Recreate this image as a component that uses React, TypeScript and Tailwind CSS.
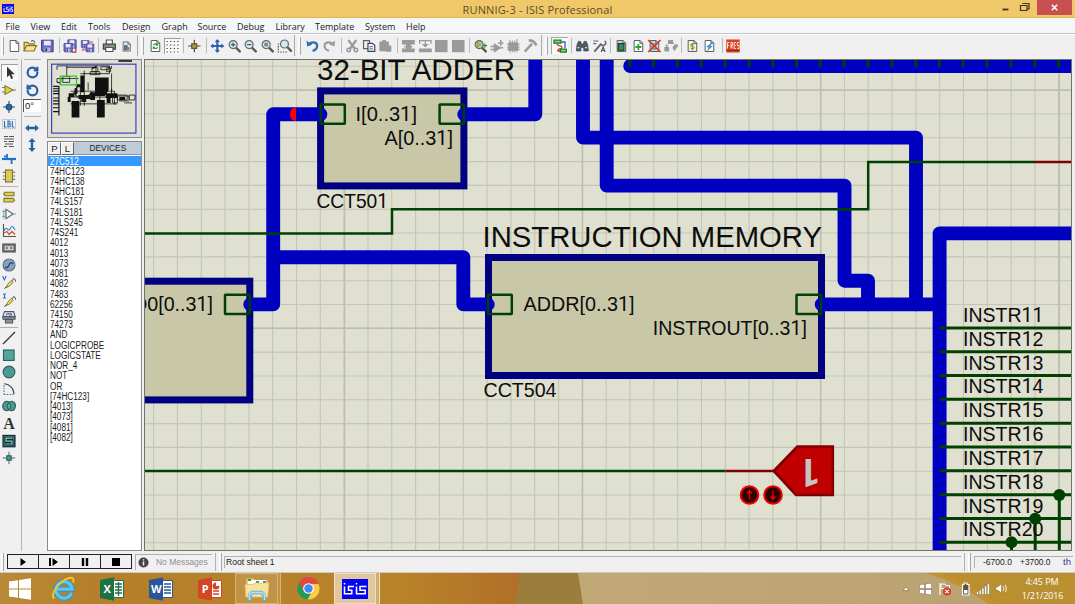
import React from "react";
import { RotateCw, RotateCcw } from "lucide-react";

type Kids = { children?: React.ReactNode };

/* ---------- small building blocks ---------- */

function Ico({ children }: Kids) {
  return (
    <svg viewBox="0 0 14 14" className="h-[14px] w-[16.7px] shrink-0" fill="none" strokeWidth="1.2">
      {children}
    </svg>
  );
}

function Sep() {
  return <div className="ml-auto mr-[2px] h-[15px] w-px shrink-0 bg-[#b9b9b9]" />;
}

function Grip() {
  return <div className="mr-[3px] h-[18px] w-[3px] shrink-0 border-r border-l border-r-[#a6a6a6] border-l-white bg-[#f4f4f4]" />;
}

function BigSep() {
  return (
    <div className="ml-auto flex h-[21px] items-center">
      <div className="mr-[3px] h-[21px] w-px bg-[#a8a8a8]" />
      <Grip />
    </div>
  );
}

const Page = ({ fill = "#fff" }: { fill?: string }) => (
  <path d="M2.8 1.5h6l2.6 2.6v8.4H2.8zM8.6 1.5v2.8h2.8" fill={fill} stroke="#5a5f66" strokeWidth="1" />
);

const Disk = ({ x = 1.2, y = 1.2, s = 1 }: { x?: number; y?: number; s?: number }) => (
  <g transform={`translate(${x} ${y}) scale(${s})`}>
    <path d="M0 0h11.6v11.6H1.2L0 10.4z" fill="#6a68c8" stroke="#35337a" strokeWidth=".9" />
    <rect x="2.4" y=".6" width="6.8" height="4.6" fill="#e9e9f6" />
    <rect x="3" y="7.4" width="5.8" height="4" fill="#b7b9d8" />
    <rect x="3.8" y="8" width="1.8" height="3" fill="#35337a" />
  </g>
);

const Lens = ({ children, fill = "#d9e8ec" }: Kids & { fill?: string }) => (
  <>
    <path d="M8.6 8.6l3.8 3.8" stroke="#6b5640" strokeWidth="2.4" strokeLinecap="round" />
    <circle cx="5.8" cy="5.6" r="4" fill={fill} stroke="#5f6a70" strokeWidth="1.2" />
    {children}
  </>
);

/* ---------- title and menu ---------- */

function TitleBar() {
  return (
    <div className="flex h-[18px] items-start border-b border-[#dcb45c] bg-[#f0c869]">
      <div className="flex w-[20px] pt-[4px] pl-[2px]">
        <svg viewBox="0 0 12 10" className="h-[10px] w-[12px] bg-[#0808f0]" fill="none" stroke="#fff" strokeWidth=".9">
          <path d="M2 2v.8M2 4v3.6h2M6.5 3.2H4.4v2h2v2.4H4M8 2v.8M8 4v3.6M11 3.2H9.2v2h1.4v2.4H8.6" />
        </svg>
      </div>
      <div className="flex-1 pl-[54px] text-center font-['Open_Sans',sans-serif] text-[11px] leading-[19px] tracking-[0.15px] text-[#5d4c28]">
        RUNNIG-3 - ISIS Professional
      </div>
      <div className="flex h-[15px] items-center">
        <svg viewBox="0 0 36 15" className="h-[15px] w-[36px]" fill="none" stroke="#3d3420">
          <path d="M1.5 9.5h6" strokeWidth="1.8" />
          <path d="M21 5.5h5v5h-6.5v-5zM22 4V3.500h6V9h-1.500" strokeWidth="1.2" />
        </svg>
        <div className="mr-[3px] flex h-[15px] w-[35px] items-center justify-center bg-[#c75050]">
          <svg viewBox="0 0 7 7" className="h-[7px] w-[7px]" stroke="#fff" strokeWidth="1.5">
            <path d="M.8.8l5.4 5.4M6.2.8L.8 6.2" />
          </svg>
        </div>
      </div>
    </div>
  );
}

function MenuBar() {
  const item = "shrink-0 whitespace-nowrap";
  return (
    <div className="flex h-[16px] items-center border-b border-[#c4c4c4] bg-[#f4f6f8] pt-[2px] pl-[5.5px] font-['Open_Sans',sans-serif] text-[9px] leading-[14px] text-[#1c1c1c]">
      <span className={`${item} w-[25px]`}>File</span>
      <span className={`${item} w-[30.5px]`}>View</span>
      <span className={`${item} w-[27px]`}>Edit</span>
      <span className={`${item} w-[34px]`}>Tools</span>
      <span className={`${item} w-[39.5px]`}>Design</span>
      <span className={`${item} w-[36px]`}>Graph</span>
      <span className={`${item} w-[39.5px]`}>Source</span>
      <span className={`${item} w-[38.5px]`}>Debug</span>
      <span className={`${item} w-[39.5px]`}>Library</span>
      <span className={`${item} w-[50px]`}>Template</span>
      <span className={`${item} w-[41px]`}>System</span>
      <span className={item}>Help</span>
    </div>
  );
}

/* ---------- main toolbar ---------- */

function Toolbar() {
  const g = "flex shrink-0 items-center";
  const grey = "#9a9a9a";
  return (
    <div className="flex h-[25px] items-center border-t border-white bg-[#f0f0f0] pb-[3px]">
      <div className={`${g} w-[5.7px] pl-[1px]`}><Grip /></div>
      <div className={`${g} w-[56.3px]`}>
        <Ico><Page /></Ico>
        <Ico>
          <path d="M.8 12V3.4h3.6l1 1.4h5.4V7" fill="#efd983" stroke="#8d7326" />
          <path d="M.8 12L3.2 6.6h10L10.6 12z" fill="#f6e596" stroke="#8d7326" />
          <path d="M7.5 2.4c1.6-1.4 3.6-.8 4 1.2" stroke="#5a6b80" />
        </Ico>
        <Ico><Disk /></Ico>
        <Sep />
      </div>
      <div className={`${g} w-[39.5px]`}>
        <Ico><Disk x={4.5} y={0.8} s={0.72} /><Disk x={0.6} y={4.6} s={0.72} /><path d="M8.5 13.2h4V9" stroke="#b33" /></Ico>
        <Ico><Disk x={1} y={1.5} s={0.65} /><Disk x={5.6} y={5} s={0.68} /><path d="M9 3h3.4M1.5 11h3" stroke="#b33" /></Ico>
        <Sep />
      </div>
      <div className={`${g} w-[45.5px]`}>
        <Ico>
          <path d="M4 5V1h6v4" fill="#fff" stroke="#555" />
          <path d="M1 5.2h12v5H1z" fill="#7f8a8a" stroke="#3f4646" />
          <path d="M3.4 8.5h7.2v4H3.4z" fill="#fff" stroke="#555" />
          <path d="M9 7h2.6" stroke="#5ad05a" />
        </Ico>
        <Ico><g transform="translate(1.4 1.6) scale(.84)"><Page fill="#e6e6e6" /><path d="M4.6 6h3v5h-3zM9.4 8v3" fill="#6c7c8c" stroke="#4c5c6c" /></g></Ico>
        <BigSep />
      </div>
      <div className={`${g} w-[39px]`}>
        <Ico><Page /><path d="M5 6.2c.6-1.6 3-1.8 4-.2M9.2 8.2c-.6 1.6-3 1.8-4 .2M9.2 4.4v1.8H7.4M5 10V8.2h1.8" stroke="#1f9c2f" strokeWidth="1.1" /></Ico>
        <div className="flex h-[16px] w-[17px] items-center justify-center border-t border-l border-[#9c9c9c] bg-[#f8f8f8]">
          <svg viewBox="0 0 13 13" className="h-[13px] w-[13px]" stroke="#333" strokeWidth="1.2" strokeDasharray="1.2 2.4">
            <path d="M.5 1.5h13M.5 5h13M.5 8.5h13M.5 12h13" />
          </svg>
        </div>
        <Sep />
      </div>
      <div className={`${g} w-[23px]`}>
        <Ico><path d="M7 .8v12.400M.8 7h12.400" stroke="#4a4a3a" /><path d="M4.400 4.800h5v4.600h-5z" fill="#a8a03c" stroke="#5e5920" /></Ico>
        <Sep />
      </div>
      <div className={`${g} w-[95.5px]`}>
        <Ico><path d="M7 1.5v11M1.5 7h11" stroke="#2a62b8" strokeWidth="2.2" /><path d="M7 0l2.6 3H4.4zM7 14l2.6-3H4.4zM0 7l3-2.6v5.2zM14 7l-3-2.6v5.2z" fill="#2a62b8" /></Ico>
        <Ico><Lens><path d="M3.6 5.6H8M5.8 3.4v4.4" stroke="#456" strokeWidth="1.2" /></Lens></Ico>
        <Ico><Lens><path d="M3.6 5.6H8" stroke="#456" strokeWidth="1.2" /></Lens></Ico>
        <Ico><Lens><rect x="4" y="3.8" width="3.6" height="3.6" fill="#77848a" /></Lens></Ico>
        <Ico><path d="M1 4.5V13h8.5" stroke="#444" strokeDasharray="1.3 1.3" /><g transform="translate(1.3 -.6)"><Lens /></g></Ico>
        <BigSep />
      </div>
      <div className={`${g} w-[39.5px]`}>
        <Ico><path d="M3.4 5.4C6 2.4 11.6 2.6 11.8 6.8c.1 2.6-2 4.6-4.6 5" stroke="#2f6cb4" strokeWidth="2.3" /><path d="M1.2 1.6l.6 6 5-1.8z" fill="#2f6cb4" /></Ico>
        <Ico><path d="M10.6 5.4C8 2.4 2.4 2.6 2.2 6.8c-.1 2.6 2 4.6 4.6 5" stroke={grey} strokeWidth="2.1" /><path d="M12.8 1.6l-.6 6-5-1.8z" fill={grey} /></Ico>
        <Sep />
      </div>
      <div className={`${g} w-[56px]`}>
        <Ico><path d="M3 1l6.6 9M11 1L4.4 10" stroke={grey} strokeWidth="2.2" /><circle cx="3.4" cy="11" r="1.7" stroke={grey} strokeWidth="1.6" /><circle cx="10.6" cy="11" r="1.7" stroke={grey} strokeWidth="1.6" /></Ico>
        <Ico><path d="M1.2 1.6h6v8h-6z" fill="#eef2f6" stroke="#56616c" /><path d="M5.6 4.4H10l2.4 2v6H5.6z" fill="#f6f8fb" stroke="#445" /><path d="M7 7.6h3.6M7 9.8h3.6" stroke="#6b86a8" /></Ico>
        <Ico><path d="M1 2.4h9.6v9.8H1zM4 1h3.6v2H4zM7 6.4h6v6.4H7z" fill={grey} /></Ico>
        <Sep />
      </div>
      <div className={`${g} w-[72px]`}>
        <Ico><path d="M.6 1h12.8v4.400H.6zM4.600 5h4.800v5H4.600zM.6 9.600h12.800v3.600H.6zM3 7h8v1.400H3z" fill={grey} /></Ico>
        <Ico><path d="M1.300 4.800V1.600h11.400v3.200M7 2v6" stroke={grey} strokeWidth="1.3" /><path d="M3.400 5h7.200L7 8.600zM.6 9.600h12.800v3.600H.6z" fill={grey} /></Ico>
        <Ico><path d="M.6 1h12.6v12.200H.6z" fill={grey} /></Ico>
        <Ico><path d="M.6 1h12.6v12.200H.6z" fill={grey} /></Ico>
        <Sep />
      </div>
      <div className={`${g} w-[79.5px]`}>
        <Ico><Lens fill="#b9d0a0"><path d="M4 3.4v4.4l3.6-2.2z" fill="#d9c840" stroke="#6b7a30" strokeWidth=".7" /></Lens><path d="M11.600 4.400v4.400M9.400 6.600h4.400" stroke="#3a8a3a" /></Ico>
        <Ico><path d="M4 5v7.600l6-3.800z" fill={grey} stroke={grey} /><path d="M0 7.400h4M0 10.400h4M9 8.800h4M10.400 1v6M7.600 4h5.600" stroke={grey} strokeWidth="1.5" /></Ico>
        <Ico><path d="M2 3.4h10v8.4H2z" fill={grey} /><path d="M3.600 1v12.600M6 1.4v12M8.4 1.4v12M10.6 0v13M.6 5.4h12.800M.6 8h12.800M.6 10.400h12.800" stroke={grey} strokeWidth="1" /></Ico>
        <Ico><path d="M1.4 12.6l7.4-8" stroke={grey} strokeWidth="2.4" /><path d="M5.4 1.6c3.6-.6 6 1 7.6 5" stroke={grey} strokeWidth="2.6" /></Ico>
        <BigSep />
      </div>
      <div className={`${g} w-[23px]`}>
        <div className="flex h-[17px] w-[16.7px] items-center justify-center border-t border-l border-[#a8a8a8] bg-[#fafafa]">
          <svg viewBox="0 0 14 14" className="h-[14px] w-[14px]" fill="none" strokeWidth="1.3">
            <path d="M4 5c1 3 5 1 5 3.4S4 9 5 12h3" stroke="#d03030" />
            <path d="M8.6 3H12v6" stroke="#3060c0" />
            <path d="M1 1.2h7v3H1zM7.4 10.2h6v3h-6z" fill="#7ad27a" stroke="#1c7c2c" />
          </svg>
        </div>
        <Sep />
      </div>
      <div className={`${g} w-[38.5px]`}>
        <Ico><path d="M1 12l.6-6L3 2.4h2.4L6 5h2l.6-2.6H11L12.4 6l.6 6H8.4V8.4H5.6V12z" fill="#4a5c68" stroke="#2d3a44" strokeWidth=".6" /><path d="M2.2 8.6h2M9.8 8.6h2" stroke="#c8dbe4" /></Ico>
        <Ico><path d="M1 2h5M1 4.6h3" stroke="#666" /><path d="M2 12.6l7-8" stroke="#5b6b78" strokeWidth="2" /><path d="M8.4 4.8a2.6 2.6 0 104-3" stroke="#5b6b78" strokeWidth="1.6" /><path d="M8.8 13l2-5.2 2 5.2M9.4 11.4h2.8" stroke="#555" strokeWidth="1.1" /></Ico>
        <Sep />
      </div>
      <div className={`${g} w-[71.5px]`}>
        <Ico><Page fill="#c9d4cc" /><path d="M4 4.600h5.600v6.600H4z" fill="#2f9c3f" stroke="#17422a" /><circle cx="6.600" cy="7.600" r="1.600" fill="#3a6ad0" /></Ico>
        <Ico><Page /><path d="M7 5v6M4 8h6" stroke="#2aa82a" strokeWidth="1.8" /></Ico>
        <Ico><Page fill="#cdd5dc" /><path d="M4 5h5M4 7.4h5M4 9.8h5" stroke="#67758a" /><path d="M.8 1l12.4 12M13.2 1L.8 13" stroke="#d03a20" strokeWidth="1.7" /></Ico>
        <Ico><path d="M4 4.2h5.4M2.4 9V5.6M11 5.6L9 9" stroke={grey} strokeWidth="1.8" /><path d="M3.6 1h5v4h-5zM0 8h4.8v4.4H0zM8 8.8l4.4-4 1.6 2-4 5.4z" fill={grey} /></Ico>
        <Sep />
      </div>
      <div className={`${g} w-[40.5px]`}>
        <Ico><Page fill="#f3f1d6" /><path d="M8.800 5.400c-1-.9-3.400-.7-3.400.7 0 1.600 3.400.9 3.400 2.500 0 1.400-2.600 1.600-3.600.5M7 4v7.400" stroke="#8a7f20" strokeWidth="1" /></Ico>
        <Ico><Page /><path d="M9.400 3.800L4.400 8h2.400L5 11.600 10 7.200H7.400z" fill="#39a0e8" stroke="#1d6ab8" strokeWidth=".5" /></Ico>
        <Sep />
      </div>
      <svg viewBox="0 0 14 14" className="ml-[1px] h-[14px] w-[14px]" fill="none">
        <rect x=".3" y=".5" width="13.4" height="13" fill="#d8431f" />
        <path d="M.3 11.500h13.400" stroke="#8e2a12" strokeWidth="1.2" />
        <path d="M1.500 9.500v-6h2M1.500 6.300h1.600M5 9.500v-6h1.600v3H5l1.700 3M10 3.500H8.200v6H10M8.200 6.300h1.500M13 3.500h-1.700v3H13v3h-1.700" stroke="#fff" strokeWidth=".8" />
      </svg>
    </div>
  );
}

/* ---------- left tools ---------- */

function T({ children, active }: Kids & { active?: boolean }) {
  return (
    <div className={`flex h-[17.2px] w-[17px] shrink-0 items-center justify-center ${active ? "border-t border-l border-[#a0a0a0] bg-[#f9f9f9]" : ""}`}>
      <svg viewBox="0 0 14 14" className="h-[14px] w-[14px]" fill="none" strokeWidth="1.1">{children}</svg>
    </div>
  );
}

const Probe = () => (
  <>
    <path d="M4.600 12.400l1-3 3.600-4 2 1.800-3.800 4z" fill="#e6dc4c" stroke="#6b6630" strokeWidth=".8" />
    <path d="M2.400 13.600l2.400-2M10.400 5.600c.6-3 2.800-2.400 3.200 1" stroke="#333" strokeWidth="1" />
  </>
);

function ModeTools() {
  const rule = "my-[1.3px] h-px w-[18px] shrink-0 bg-[#b0b0b0]";
  return (
    <div className="flex w-[22px] shrink-0 flex-col items-center border-r border-[#b4b4b4] pr-[3px]">
      <div className="mb-[4px] h-px w-[18px] shrink-0 bg-[#b0b0b0]" />
      <T active><path d="M4 .8v10.400l2.500-2.300 1.700 4.200 1.900-.8-1.700-4h3.400z" fill="#333" /></T>
      <T><path d="M0 4.500h3M0 9h3M11 7h3" stroke="#777" /><path d="M3 2.600v8.800L11 7z" fill="#dccf50" stroke="#857c2a" /></T>
      <T><path d="M7 1v12M1 7h12" stroke="#2f4858" /><circle cx="7" cy="7" r="2.800" fill="#2868b8" stroke="#1b4674" /></T>
      <T><rect x=".6" y="2.500" width="12.800" height="9" stroke="#6688aa" strokeDasharray="1 1" strokeWidth=".7" /><path d="M2.500 4v6h2M6 4v6h1.200c1.600 0 1.600-3 0-3H6h1c1.400 0 1.400-3 0-3zM10.300 4v6h2" stroke="#2b6fae" strokeWidth="1.100" /></T>
      <T><path d="M2 2.500h4M7 2.500h5M2 5h10M2 7.500h3M6.500 7.500H12M3 10h8M2 12.500h3M7 12.500h5" stroke="#555" strokeWidth="1" /></T>
      <T><path d="M0 7h14" stroke="#1e70c8" strokeWidth="2.200" /><path d="M5 2v6M9.600 6V12M3 3.500v2" stroke="#1e70c8" strokeWidth="1.800" /></T>
      <T><path d="M.8 3.400h2M.8 7h2M.8 10.400h2M11.200 3.400h2M11.200 7h2M11.200 10.400h2" stroke="#777" /><rect x="3.500" y="1" width="7" height="12" fill="#d9cb58" stroke="#7e7628" /></T>
      <div className={rule} />
      <T><path d="M3 2.200h9v3.600H3L1.600 4zM2 8.400h9l1.500 1.800-1.500 1.800H2z" fill="#dccf50" stroke="#7e7628" /></T>
      <T><path d="M0 4.500h4M0 9.500h4M11 7h3M1.800 2.600v9" stroke="#7aa" /><path d="M4 2.200v9.600L11 7z" fill="#fafafa" stroke="#566" /></T>
      <T><path d="M1.500 0v12.500H14" stroke="#555" /><path d="M2 7c2-7 4 2 6-2s3-3 5 1" stroke="#2a78c8" /><path d="M2 9l3-1.500 2 3 3-3 3 3" stroke="#d65030" strokeWidth="1.300" /></T>
      <T><rect x=".8" y="3" width="12.400" height="8" fill="#7d7d7d" stroke="#505050" /><rect x="2.800" y="5.200" width="8.400" height="3.800" fill="#d6d6d6" /><circle cx="4.800" cy="7.100" r="1" fill="#555" /><circle cx="9.200" cy="7.100" r="1" fill="#555" /></T>
      <T><circle cx="7" cy="7" r="6" fill="#8ea0b6" stroke="#66727e" /><path d="M3 8.600c1.500 2 3 1 4-1.600s2.600-3.200 4-1" stroke="#1a4fae" strokeWidth="1.500" /></T>
      <T><path d="M.6 1l1.800 4L4.200 1" stroke="#2a70c8" /><Probe /></T>
      <T><path d="M1 1h3M2.500 1v4M1 5h3" stroke="#2a70c8" /><Probe /></T>
      <T><path d="M2.400 1.600h9.200l1.600 5H.8z" fill="#d8e8f4" stroke="#556" /><path d="M4 5.400c1-2.400 5-2.400 6 0" stroke="#2a70c8" /><path d="M7 6.500l2.500-3" stroke="#d04020" /><path d="M1 6.800h12v2.400H1zM3.400 9.400h7.200V13H3.400z" fill="#8a949c" stroke="#4d565e" /></T>
      <div className={rule} />
      <T><path d="M1 13L13 1" stroke="#333" strokeWidth="1.200" /></T>
      <T><rect x="1.500" y="2" width="10.600" height="10.400" fill="#52a69e" stroke="#2b5f5c" /></T>
      <T><circle cx="7" cy="7" r="5.900" fill="#4a9a94" stroke="#2b5f5c" /></T>
      <T><path d="M2 12.500V2M2 12.500h10" stroke="#4a80c0" strokeDasharray="1.600 1" /><path d="M2 1.800c5 0 9.800 4 10 10.400" stroke="#444" /></T>
      <T><path d="M4 2.400c2-.6 2.500.6 3.200.6S9 1.800 10.600 2.400C13 3.400 14 6 13 9s-3.400 3-4.800 2.200c-.8-.5-1.400-.5-2.200 0C4.400 12.200 1.600 11.400.9 8.600.3 6 1.600 3 4 2.400z" fill="#4a9a94" stroke="#2b5f5c" /><path d="M7 3.400c-2 1.800-2 5.600 0 7.400 2-1.800 2-5.600 0-7.400z" fill="#6fbab2" stroke="#2b5f5c" /></T>
      <div className="flex h-[17.2px] shrink-0 items-center font-['Liberation_Serif',serif] text-[16px] leading-none font-bold text-[#333]">A</div>
      <T><rect x="1" y="1.400" width="12" height="11.400" fill="#2b7470" stroke="#123" /><path d="M10.800 4.200H4v2.900h6v2.900H3.200" stroke="#06161a" strokeWidth="2.600" /><path d="M10.600 4.200H4v2.900h6v2.900H3.400" stroke="#8fd6cc" strokeWidth="1.200" /></T>
      <T><path d="M7 .8v12.400M.8 7h12.400" stroke="#566" strokeWidth="1" /><rect x="4.800" y="4.800" width="4.400" height="4.400" fill="#4a9a94" stroke="#2b5f5c" /></T>
    </div>
  );
}

function RotateTools() {
  return (
    <div className="flex w-[25px] shrink-0 flex-col items-center pr-[5px]">
      <div className="mb-[6px] h-px w-[17px] shrink-0 bg-[#b0b0b0]" />
      <RotateCw className="mb-[5px] h-[13px] w-[13px] shrink-0 text-[#2a5fa8]" strokeWidth={4} />
      <RotateCcw className="h-[13px] w-[13px] shrink-0 text-[#2a5fa8]" strokeWidth={4} />
      <div className="mt-[2px] h-[13px] w-[18px] shrink-0 border-t border-l border-[#555] bg-white pl-px font-['Liberation_Sans',sans-serif] text-[9.5px] leading-[12px] text-[#222]">0°</div>
      <div className="mt-[4px] h-px w-[17px] shrink-0 bg-[#b0b0b0]" />
      <svg viewBox="0 0 14 14" className="mt-[3.500px] h-[14px] w-[14px] shrink-0">
        <path d="M0 7l4-3.600v2.400h6V3.400L14 7l-4 3.600V8.200H4v2.400z" fill="#2a5fa8" />
      </svg>
      <svg viewBox="0 0 14 14" className="mt-[3px] h-[14px] w-[14px] shrink-0">
        <path d="M7 0l3.600 4H8.200v6h2.400L7 14l-3.600-4h2.400V4H3.400z" fill="#2a5fa8" />
      </svg>
    </div>
  );
}

/* ---------- overview and device list ---------- */

function Overview() {
  return (
    <svg viewBox="47 59 95 79" className="h-[79px] w-[95px] shrink-0 border border-[#8a8a8a] bg-[#dfe0d0]" fill="none">
      <rect x="50.500" y="63.300" width="86.500" height="70.700" stroke="#3c3cc8" strokeWidth="1.200" />
      <path d="M119 60h14" stroke="#000" strokeWidth="1.500" />
      <g stroke="#111" strokeWidth=".8">
        <path d="M56 65h54M66 65v10M56 65v4M66 66.500h30v8M80 73h30M110 65v8M112 68v-3M60 78h18M56 81l4 3M80 84v22M84 70v36M88 82v8M68 97h40M70 91h45v14M112 88v8h18v4M112 73v20M70 104h48M100 80v30" />
        <path d="M52 86h6M52 88.500h6M52 91h6M52 93.500h6M52 98h6M52 101h6M52 104h6M52 108h6M52 112h6M58 86v30" strokeWidth="1.200" />
        <path d="M92 67h6v4h-6zM101 66h8v3h-8zM90 71h10v3H90zM107 67h4v4h-4z" />
        <path d="M118 95h10v5h-10zM130 95h6v5h-6zM113 97h5v6h-5zM120 101h10M125 103h8M62 76h7v6h-7zM56 78h4v4h-4z" />
      </g>
      <g fill="#111">
        <path d="M95 77h14v13l-4 6H95zM71 101h8v17h-8zM97 100h8v18h-8zM80 75h4v17h-4zM68 93h6v4h-6zM78 95h12v4H78zM106 93h12v5h-12z" />
        <path d="M74 88h3v6h-3zM81 98h5v4h-5zM90 92h5v8h-5zM107 97h4v6h-4zM120 97h6v3h-6zM76 84h4v3h-4zM67 97h3v5h-3z" />
      </g>
      <path d="M75 89l3-4M87 97l5-5M73 92l4 5M92 68l5-3" stroke="#111" strokeWidth="1.200" />
      <rect x="59.500" y="75.500" width="16.500" height="9" stroke="#20c820" strokeWidth="1.200" />
    </svg>
  );
}

const devices = [
  "27C512", "74HC123", "74HC138", "74HC181", "74LS157", "74LS181", "74LS245", "74S241", "4012", "4013",
  "4073", "4081", "4082", "7483", "62256", "74150", "74273", "AND", "LOGICPROBE", "LOGICSTATE",
  "NOR_4", "NOT", "OR", "[74HC123]", "[4013]", "[4073]", "[4081]", "[4082]",
];

function DevicePanel() {
  const btn = "flex w-[13px] items-center justify-center border border-t-white border-r-[#666] border-b-[#666] border-l-white bg-[#f0f0f0]";
  return (
    <div className="mt-[3px] flex min-h-0 flex-1 flex-col border border-[#8a8a8a] bg-white font-['Liberation_Sans',sans-serif] text-[#1c1c1c]">
      <div className="flex h-[13px] shrink-0 bg-[#becbd9] text-[9.5px] leading-none">
        <div className={btn}>P</div>
        <div className={btn}>L</div>
        <div className="flex flex-1 items-center justify-center border-b border-[#8a96a4]">
          <span className="scale-x-[.88]">DEVICES</span>
        </div>
      </div>
      <div className="flex flex-col pt-[0.500px]">
        {devices.map((d, i) => (
          <div key={d} className={`h-[10.240px] pl-[1.500px] text-[10px] leading-[12px] whitespace-nowrap ${i === 0 ? "bg-[#3399ff] text-white" : ""}`}>
            <span className="inline-block origin-left scale-x-[.82]">{d}</span>
          </div>
        ))}
      </div>
    </div>
  );
}

/* ---------- schematic ---------- */

const PITCH = 23.82;

function Label({ x, y, w, size = 19.8, children }: { x: number; y: number; w: number; size?: number; children: string }) {
  return (
    <text x={x} y={y} fontSize={size} textLength={w} lengthAdjust="spacingAndGlyphs" fill="#0c0c0c">
      {children.split(/(1)/).map((s, i) => (s === "1" ? <tspan key={i} fontFamily="Roboto, sans-serif">1</tspan> : s))}
    </text>
  );
}

function Schematic() {
  const cols = Array.from({ length: 39 }, (_, i) => 153.6 + i * PITCH);
  const rows = Array.from({ length: 21 }, (_, i) => 66.3 + i * PITCH);
  const ticks = Array.from({ length: 19 }, (_, i) => 629.8 + i * PITCH);
  const nets = Array.from({ length: 10 }, (_, i) => i);
  return (
    <svg viewBox="145 60 926 490" className="h-[490px] w-[926px] bg-[#dfe0d0] font-['Liberation_Sans',sans-serif]" fill="none">
      <g stroke="#c4c5b5" strokeWidth="1.100">
        {cols.map((x) => <path key={x} d={`M${x} 60V550`} />)}
        {rows.map((y) => <path key={y} d={`M145 ${y}H1071`} />)}
      </g>
      <path d="M344.500 60V550M582.500 60V550M820.700 60V550M1059.200 60V550M145 90.300H1071M145 328.300H1071" stroke="#bcbdad" strokeWidth="1.500" />

      <g fill="#c8c8a8" stroke="#000080" strokeWidth="7">
        <rect x="320.600" y="90.900" width="143.300" height="95" />
        <rect x="100" y="281.200" width="149.800" height="118.700" />
        <rect x="488.500" y="257.500" width="333" height="118" />
      </g>

      <g stroke="#0000c0" strokeWidth="13.900" strokeLinejoin="round" strokeLinecap="round">
        <path d="M320.400 114.300H273.200V304.400H250.300" />
        <path d="M276 257.200H463.300V304.400H487.700" />
        <path d="M464.300 114.300H535.300V40" />
        <path d="M583 40V137.600H916V304.400" />
        <path d="M606.700 40V185.600H844.500V280.700H868V304.400" />
        <path d="M821.700 304.400H937" />
        <path d="M1090 233.400H939.600V570" />
        <path d="M630.200 66H1090" />
      </g>
      <path d="M296 107.600V121C288 121 288 107.600 296 107.600z" fill="#ff0000" />

      <g stroke="#004000" strokeWidth="2.500">
        <path d="M145 233.400H392V209.300H868.200V162H1035" />
        <path d="M145 471H725.500" />
        <rect x="320.600" y="104.600" width="24.200" height="19.200" rx=".5" />
        <rect x="439.600" y="104.600" width="24.200" height="19.200" rx=".5" />
        <rect x="225" y="294.800" width="24.800" height="19.200" rx=".5" />
        <rect x="488" y="294.800" width="23.800" height="19.200" rx=".5" />
        <rect x="796.500" y="294.800" width="24.500" height="19.200" rx=".5" />
      </g>
      <g stroke="#004000" strokeWidth="3" strokeLinecap="round">
        {ticks.map((x) => <path key={x} d={`M${x} 58V66`} />)}
        {nets.map((i) => <path key={i} d={`M940.500 ${327.900 + i * PITCH}H1080`} />)}
        <path d="M1059.300 495V560M1035.200 519V560M1011.500 542V560" />
      </g>
      <path d="M1035 162H1071M725.500 471H774" stroke="#800000" strokeWidth="2.500" />

      <Label x={317} y={80} w={198} size={29}>32-BIT ADDER</Label>
      <Label x={355.500} y={121} w={61.500}>I[0..31]</Label>
      <Label x={384.500} y={145} w={68.500}>A[0..31]</Label>
      <Label x={316.500} y={207.700} w={71.500}>CCT501</Label>
      <Label x={482.500} y={247} w={339.500} size={30}>INSTRUCTION MEMORY</Label>
      <Label x={523.500} y={311.300} w={111}>ADDR[0..31]</Label>
      <Label x={652.800} y={335} w={154}>INSTROUT[0..31]</Label>
      <Label x={483.500} y={397.300} w={73}>CCT504</Label>
      <Label x={132} y={311.300} w={81}>Q0[0..31]</Label>
      {nets.map((i) => (
        <Label key={i} x={963} y={322 + i * PITCH} w={80.500}>{`INSTR${11 + i}`}</Label>
      ))}
      <g fill="#004000">
        <circle cx="1059.300" cy="495" r="6" />
        <circle cx="1035.200" cy="518.700" r="6" />
        <circle cx="1011.500" cy="542.300" r="6" />
      </g>

      <path d="M773.800 471L797.300 446.500H832.800V495H796z" fill="#c00000" stroke="#800000" strokeWidth="2.600" />
      <text transform="translate(820.500 458.500) rotate(180)" fontFamily="Roboto, sans-serif" fontSize="38" fontWeight="700" fill="#c4c4c4">1</text>
      <g fill="#300000" stroke="#f00000" strokeWidth="2">
        <circle cx="749.500" cy="495" r="8.800" />
        <circle cx="773" cy="495" r="8.800" />
        <path d="M749.500 499.500V491M747 493.500l2.500-2.700 2.500 2.700M773 490.500V499M770.500 496.500l2.500 2.700 2.500-2.700" fill="none" strokeWidth="1.300" />
      </g>
    </svg>
  );
}

/* ---------- status bar ---------- */

function StatusBar() {
  const b = "flex h-[14px] w-[31px] items-center justify-center border-r border-b border-[#222] bg-[#f0f0f0]";
  return (
    <div className="flex h-[22px] shrink-0 items-center border-b border-[#cfcbc0] bg-[#f0f0f0] font-['Liberation_Sans',sans-serif] text-[9.5px] leading-none text-[#222]">
      <div className="flex w-[7px] pl-[1px]"><Grip /></div>
      <div className="flex border-t border-l border-[#222]">
        <div className={b}><svg viewBox="0 0 10 10" className="h-[10px] w-[10px]"><path d="M2.500 1L8 5 2.500 9z" /></svg></div>
        <div className={b}><svg viewBox="0 0 10 10" className="h-[10px] w-[10px]"><path d="M0 1h2v8H0zM3.500 1L9 5 3.500 9z" /></svg></div>
        <div className={b}><svg viewBox="0 0 10 10" className="h-[10px] w-[10px]"><path d="M1.800 1h2.400v8H1.800zM5.800 1h2.400v8H5.800z" /></svg></div>
        <div className={b}><svg viewBox="0 0 10 10" className="h-[10px] w-[10px]"><path d="M1 1h8v8H1z" /></svg></div>
      </div>
      <div className="ml-[3px] flex h-[16px] w-[77px] items-center border-t border-l border-t-[#b0b0b0] border-l-[#b0b0b0] pl-[2px]">
        <svg viewBox="0 0 12 12" className="h-[11px] w-[11px] shrink-0"><circle cx="6" cy="6" r="5.500" fill="#444" /><path d="M6 2.400v1.400M6 5v4.400" stroke="#eee" strokeWidth="1.700" /></svg>
        <span className="ml-[6.500px] origin-left scale-x-[.89] whitespace-nowrap text-[#8f8f8f]">No Messages</span>
      </div>
      <div className="ml-[3px] flex"><div className="mr-[3px] h-[18px] w-px bg-[#b0b0b0]" /><Grip /></div>
      <div className="-ml-[1px] flex h-[12px] w-[737px] items-center border-t border-l border-[#b0b0b0] pl-[1px]">
        <span className="origin-left scale-x-[.9] whitespace-nowrap">Root sheet 1</span>
      </div>
      <div className="ml-[3px] flex"><div className="mr-[3px] h-[18px] w-px bg-[#b0b0b0]" /><Grip /></div>
      <div className="flex h-[12px] w-[99px] items-center border-t border-l border-[#b0b0b0] pl-[8px]">
        <span className="w-[37px] whitespace-nowrap"><span className="inline-block origin-left scale-x-[.9]">-6700.0</span></span>
        <span className="w-[43px] whitespace-nowrap"><span className="inline-block origin-left scale-x-[.88]">+3700.0</span></span>
        <span className="text-[#3a3a90]">th</span>
      </div>
    </div>
  );
}

/* ---------- taskbar ---------- */

function Office({ letter, color, children }: Kids & { letter: string; color: string }) {
  return (
    <svg viewBox="0 0 24 24" className="h-[24px] w-[24px]" fill="none">
      <path d="M12 3.500h11.500v17H12z" fill="#fff" stroke={color} />
      {children}
      <path d="M0 3l14-2.800v23.600L0 21z" fill={color} />
      <text x="7.200" y="16" textAnchor="middle" fontFamily="Open Sans, sans-serif" fontWeight="700" fontSize="11" fill="#fff">{letter}</text>
    </svg>
  );
}

function Taskbar() {
  const cell = "flex h-full shrink-0 items-center justify-center";
  return (
    <div className="relative isolate flex h-[31px] shrink-0 items-center bg-[linear-gradient(90deg,#bb8a38_0px,#b57f2b_90px,#b98329_400px,#b07029_518px)] font-['Open_Sans',sans-serif] text-white">
      <svg viewBox="0 0 1075 31" className="absolute inset-0 -z-10 h-[31px] w-[1075px]">
        <defs>
          <linearGradient id="sand" x1="0" x2="1" y1="0" y2="0">
            <stop offset="0" stopColor="#c1a977" />
            <stop offset="1" stopColor="#baa070" />
          </linearGradient>
        </defs>
        <path d="M521 0h58l5 31h-69z" fill="#9c7e3c" />
        <path d="M578 0h500v31H583z" fill="url(#sand)" />
        <path d="M926 0c24 7 44 17 62 31h87V0z" fill="#b98f30" />
        <path d="M926 0c24 7 44 17 62 31h8C978 15 958 6 940 0z" fill="#c2922c" />
      </svg>
      <div className={`${cell} w-[39px]`}>
        <svg viewBox="0 0 22 22" className="h-[22px] w-[22px]" fill="#fff"><path d="M0 3.500l9-1.300v8.300H0zM10 2l12-1.700v10.200H10zM0 11.500h9v8.300l-9-1.300zM10 11.500h12v10.200L10 20z" /></svg>
      </div>
      <div className={`${cell} w-[48px]`}>
        <svg viewBox="0 0 26 26" className="h-[25px] w-[25px]" fill="none">
          <path d="M21.500 17.500A8.500 8.500 0 1122 13.600H6" stroke="#1d8fd0" strokeWidth="5" />
          <path d="M21.500 17.500A8.500 8.500 0 1122 13.600H6" stroke="#56c8f4" strokeWidth="3.400" />
          <path d="M3.500 23.500C-2 20 9 5.500 17.500 2.400c5-1.800 7 .4 5.300 4.600" stroke="#f4c62e" strokeWidth="2" />
        </svg>
      </div>
      <div className={`${cell} w-[49px]`}><Office letter="X" color="#1f7244"><path d="M15 7h7M15 10h7M15 13h7M15 16h7M18.500 5v14" stroke="#1f7244" strokeWidth="1.300" /></Office></div>
      <div className={`${cell} w-[49px]`}><Office letter="W" color="#2a5699"><path d="M15 7h7M15 10h7M15 13h7M15 16h7" stroke="#2a5699" strokeWidth="1.300" /></Office></div>
      <div className={`${cell} w-[50px]`}><Office letter="P" color="#d24625"><path d="M15 14h6M15 17h6" stroke="#d24625" strokeWidth="1.300" /><path d="M18 5.500a3.500 3.500 0 103.500 3.500H18z" fill="#d24625" /></Office></div>
      <div className={`${cell} w-[43px] border border-[#d9b373] bg-[#ffffff26]`}>
        <svg viewBox="0 0 26 24" className="h-[24px] w-[26px]" fill="none">
          <path d="M2 3.500l1-2h7l1 2h13V18H2z" fill="#e9c765" />
          <path d="M4 3h18v4H4z" fill="#fff" /><path d="M4 3h3M12 5h3M19 6h3" stroke="#2aa04a" strokeWidth="2" /><path d="M19 5h3" stroke="#3a7ad0" strokeWidth="2" />
          <path d="M1 7.500h8l2-1.500h14l-1.400 14H2z" fill="#f7e29a" stroke="#e3c467" strokeWidth=".8" />
          <path d="M6 23.500v-6l2.500-2h9l2.500 2v6" stroke="#62b6dc" strokeWidth="3.600" /><path d="M5.500 23v-5.800l3-1.700h9l3 1.700V23" stroke="#b5e2f4" strokeWidth="1.500" />
        </svg>
      </div>
      <div className="mr-[2px] h-full w-[3px] border-r border-[#d9b373] bg-[#ffffff26]" />
      <div className={`${cell} w-[50px]`}>
        <svg viewBox="0 0 24 24" className="h-[23px] w-[23px]">
          <path d="M12 12L2 6A11.500 11.500 0 0122.300 7z" fill="#dd4b3e" />
          <path d="M2 6a11.500 11.500 0 009 17.500L16 14l-4-2z" fill="#1f9d58" />
          <path d="M22.300 7A11.500 11.500 0 0111 23.500L16.500 14 12 7z" fill="#fccd43" />
          <path d="M12 7h10.300A11 11 0 002 6l5 8z" fill="#dd4b3e" />
          <circle cx="12" cy="12" r="5.600" fill="#fff" /><circle cx="12" cy="12" r="4.400" fill="#4587f3" />
        </svg>
      </div>
      <div className={`${cell} ml-[1px] w-[42px] border border-[#efe0c0] bg-[#ffffff8c]`}>
        <svg viewBox="0 0 26 20" className="h-[20px] w-[26px] bg-[#0404f4]" fill="none" stroke="#fff" strokeWidth="1.500">
          <path d="M2.500 4v1.600M2.500 7.500v7.300h7.300v-3.600H6.500V7.500H12M14.500 4v1.600M14.500 7.500v7.300h8.700v-3.600H18V7.500h6.500" />
        </svg>
      </div>
      <div className="h-full w-[4px] border-r border-[#efe0c0] bg-[#ffffff59]" />
      <div className="ml-auto flex items-center">
        <svg viewBox="0 0 8 6" className="mr-[9px] h-[6px] w-[8px]"><path d="M1 4.500L4 1l3 3.500z" fill="#fff" stroke="#6d6044" strokeWidth=".6" /></svg>
        <svg viewBox="0 0 14 14" className="mr-[6px] h-[14px] w-[13px]" fill="#fff" stroke="#6d6044" strokeWidth=".5"><path d="M.5 2.500l5.500-.8v4.800H.500zM7 1.500L13.500.6v5.900H7zM.5 7.500H6v4.800l-5.500-.8zM7 7.500h6.500v5.900L7 12.500z" /></svg>
        <svg viewBox="0 0 14 14" className="mr-[7px] h-[14px] w-[14px]" fill="none"><path d="M2 1v12" stroke="#fff" strokeWidth="1.200" /><path d="M3 2h4l1 1.500h3.500V8H8L7 6.500H3z" stroke="#fff" /><circle cx="9" cy="9.500" r="4" fill="#dc3c34" /><path d="M7.300 7.800l3.400 3.400M10.700 7.800l-3.400 3.400" stroke="#fff" strokeWidth="1.200" /></svg>
        <svg viewBox="0 0 14 14" className="h-[14px] w-[14px]" fill="none"><path d="M5 1h3v1.500h2v10.500H3.500V2.500H5z" fill="#5e5544" stroke="#fff" strokeWidth="1.200" /><path d="M5 8h3.500v3.500H5z" fill="#fff" /></svg>
        <svg viewBox="0 0 14 12" className="mx-[2.500px] h-[12px] w-[14px]" fill="#fff" stroke="#6d6044" strokeWidth=".4"><path d="M.5 8.500h2v3h-2zM3.200 7h2v4.500h-2zM5.900 5h2v6.500h-2zM8.600 3h2v8.500h-2zM11.300.8h2v10.700h-2z" /></svg>
        <svg viewBox="0 0 14 14" className="ml-[3px] h-[13px] w-[13px]" fill="none"><path d="M1 5h2.500L7 1.500v11L3.500 9H1z" fill="#fff" stroke="#6d6044" strokeWidth=".5" /><path d="M8.800 4.500c1 1.500 1 3.500 0 5M11 3c1.600 2.500 1.600 5.500 0 8" stroke="#fff" strokeWidth="1" /></svg>
        <div className="w-[67px] text-center text-[9px] leading-[13.500px] tracking-[-0.1px]">
          <div className="pl-[1px]">4:45 PM</div>
          <div className="pl-[2px]">1/21/2016</div>
        </div>
      </div>
    </div>
  );
}

export default function App() {
  return (
    <div className="flex h-[604px] w-[1075px] flex-col overflow-hidden bg-[#f0f0f0]">
      <TitleBar />
      <MenuBar />
      <Toolbar />
      <div className="flex h-[492px] shrink-0">
        <ModeTools />
        <RotateTools />
        <div className="flex w-[95px] shrink-0 flex-col">
          <Overview />
          <DevicePanel />
        </div>
        <div className="ml-[2px] h-[492px] w-[928px] shrink-0 border border-[#707070]">
          <Schematic />
        </div>
      </div>
      <StatusBar />
      <Taskbar />
    </div>
  );
}
